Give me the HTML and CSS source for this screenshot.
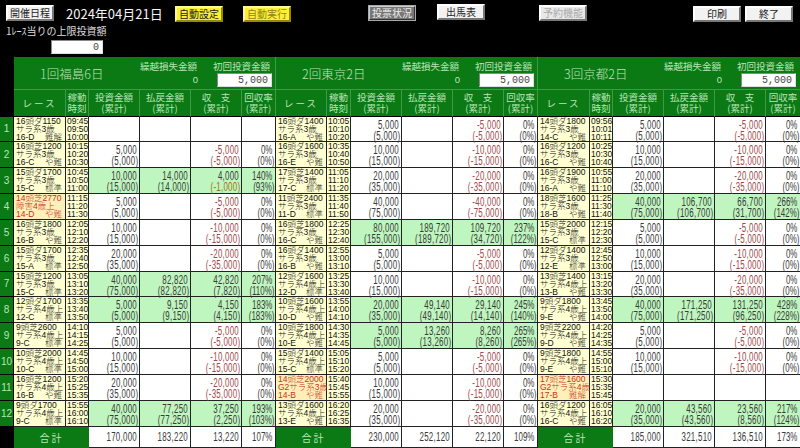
FILE: index.html
```html
<!DOCTYPE html>
<html lang="ja">
<head>
    <meta charset="UTF-8">
    <title>開催日程</title>
    <link rel="stylesheet" href="styles.css">
</head>
<body>
<header class="toolbar">
    <button class="btn btn-schedule">開催日程</button>
    <span class="date">2024年04月21日</span>
    <button class="btn yellow btn-auto1">自動設定</button>
    <button class="btn yellow faded btn-auto2">自動実行</button>
    <button class="btn dark btn-vote">投票状況</button>
    <button class="btn btn-card">出馬表</button>
    <button class="btn off btn-reserve">予約機能</button>
    <button class="btn btn-print">印刷</button>
    <button class="btn btn-quit">終了</button>
</header>

<section class="limit">
    <p>1ﾚｰｽ当りの上限投資額</p>
    <div class="box limit-box">0</div>
</section>

<main class="board">
    <!-- heading rows -->
    <div class="gutter"></div>
    <div class="venue">
        <h2>1回福島6日</h2>
        <div class="carry"><span>繰越損失金額</span><span class="carry-val">0</span></div>
        <div class="first"><span>初回投資金額</span><div class="box">5,000</div></div>
    </div>
    <div class="venue">
        <h2>2回東京2日</h2>
        <div class="carry"><span>繰越損失金額</span><span class="carry-val">0</span></div>
        <div class="first"><span>初回投資金額</span><div class="box">5,000</div></div>
    </div>
    <div class="venue">
        <h2>3回京都2日</h2>
        <div class="carry"><span>繰越損失金額</span><span class="carry-val">0</span></div>
        <div class="first"><span>初回投資金額</span><div class="box">5,000</div></div>
    </div>

    <div class="th wide">レース</div><div class="th">稼動<br>時刻</div><div class="th">投資金額<br>(累計)</div><div class="th">払戻金額<br>(累計)</div><div class="th">収　支<br>(累計)</div><div class="th">回収率<br>(累計)</div>
    <div class="th wide">レース</div><div class="th">稼動<br>時刻</div><div class="th">投資金額<br>(累計)</div><div class="th">払戻金額<br>(累計)</div><div class="th">収　支<br>(累計)</div><div class="th">回収率<br>(累計)</div>
    <div class="th wide">レース</div><div class="th">稼動<br>時刻</div><div class="th">投資金額<br>(累計)</div><div class="th">払戻金額<br>(累計)</div><div class="th">収　支<br>(累計)</div><div class="th">回収率<br>(累計)</div>

    <!-- 1R -->
    <div class="no">1</div>
    <div class="race">16頭ダ1150<br>サラ系3歳<br>16-D<em>難解</em></div><div class="time">09:45<br>09:50<br>10:00</div><div class="m"></div><div class="m"></div><div class="m"></div><div class="m rate"></div>
    <div class="race">16頭ダ1400<br>サラ系3歳<br>16-A<em>や難</em></div><div class="time">10:05<br>10:10<br>10:20</div><div class="m"><span>5,000</span><span>(5,000)</span></div><div class="m"></div><div class="m neg"><span>-5,000</span><span>(-5,000)</span></div><div class="m rate"><span>0%</span><span>(0%)</span></div>
    <div class="race">14頭ダ1800<br>サラ系3歳<br>14-C<em>や難</em></div><div class="time">09:56<br>10:01<br>10:11</div><div class="m"><span>5,000</span><span>(5,000)</span></div><div class="m"></div><div class="m neg"><span>-5,000</span><span>(-5,000)</span></div><div class="m rate"><span>0%</span><span>(0%)</span></div>

    <!-- 2R -->
    <div class="no">2</div>
    <div class="race">16頭芝1200<br>サラ系3歳<br>16-C<em>や難</em></div><div class="time">10:15<br>10:20<br>10:30</div><div class="m"><span>5,000</span><span>(5,000)</span></div><div class="m"></div><div class="m neg"><span>-5,000</span><span>(-5,000)</span></div><div class="m rate"><span>0%</span><span>(0%)</span></div>
    <div class="race">16頭ダ1600<br>サラ系3歳<br>16-E<em>や難</em></div><div class="time">10:35<br>10:40<br>10:50</div><div class="m"><span>10,000</span><span>(15,000)</span></div><div class="m"></div><div class="m neg"><span>-10,000</span><span>(-15,000)</span></div><div class="m rate"><span>0%</span><span>(0%)</span></div>
    <div class="race">16頭ダ1200<br>サラ系3歳<br>16-C<em>や難</em></div><div class="time">10:25<br>10:30<br>10:40</div><div class="m"><span>10,000</span><span>(15,000)</span></div><div class="m"></div><div class="m neg"><span>-10,000</span><span>(-15,000)</span></div><div class="m rate"><span>0%</span><span>(0%)</span></div>

    <!-- 3R -->
    <div class="no">3</div>
    <div class="race">15頭ダ1700<br>サラ系3歳<br>15-C<em>標準</em></div><div class="time">10:45<br>10:50<br>11:00</div><div class="m win"><span>10,000</span><span>(15,000)</span></div><div class="m win"><span>14,000</span><span>(14,000)</span></div><div class="m win"><span>4,000</span><span class="short">(-1,000)</span></div><div class="m rate win"><span>140%</span><span>(93%)</span></div>
    <div class="race">17頭芝1400<br>サラ系3歳<br>17-C<em>標準</em></div><div class="time">11:05<br>11:10<br>11:20</div><div class="m"><span>20,000</span><span>(35,000)</span></div><div class="m"></div><div class="m neg"><span>-20,000</span><span>(-35,000)</span></div><div class="m rate"><span>0%</span><span>(0%)</span></div>
    <div class="race">16頭ダ1900<br>サラ系3歳<br>16-A<em>や難</em></div><div class="time">10:55<br>11:00<br>11:10</div><div class="m"><span>20,000</span><span>(35,000)</span></div><div class="m"></div><div class="m neg"><span>-20,000</span><span>(-35,000)</span></div><div class="m rate"><span>0%</span><span>(0%)</span></div>

    <!-- 4R -->
    <div class="no">4</div>
    <div class="race grade">14頭芝2770<br>障害4歳上<br>14-D<em>や難</em></div><div class="time">11:15<br>11:20<br>11:30</div><div class="m"><span>5,000</span><span>(5,000)</span></div><div class="m"></div><div class="m neg"><span>-5,000</span><span>(-5,000)</span></div><div class="m rate"><span>0%</span><span>(0%)</span></div>
    <div class="race">11頭芝2400<br>サラ系3歳<br>11-D<em>標準</em></div><div class="time">11:35<br>11:40<br>11:50</div><div class="m"><span>40,000</span><span>(75,000)</span></div><div class="m"></div><div class="m neg"><span>-40,000</span><span>(-75,000)</span></div><div class="m rate"><span>0%</span><span>(0%)</span></div>
    <div class="race">18頭芝1600<br>サラ系3歳<br>18-B<em>や難</em></div><div class="time">11:25<br>11:30<br>11:40</div><div class="m win"><span>40,000</span><span>(75,000)</span></div><div class="m win"><span>106,700</span><span>(106,700)</span></div><div class="m win"><span>66,700</span><span>(31,700)</span></div><div class="m rate win"><span>266%</span><span>(142%)</span></div>

    <!-- 5R -->
    <div class="no">5</div>
    <div class="race">16頭芝1800<br>サラ系3歳<br>16-B<em>や難</em></div><div class="time">12:05<br>12:10<br>12:20</div><div class="m"><span>10,000</span><span>(15,000)</span></div><div class="m"></div><div class="m neg"><span>-10,000</span><span>(-15,000)</span></div><div class="m rate"><span>0%</span><span>(0%)</span></div>
    <div class="race">16頭芝1800<br>サラ系3歳<br>16-C<em>や難</em></div><div class="time">12:25<br>12:30<br>12:40</div><div class="m win"><span>80,000</span><span>(155,000)</span></div><div class="m win"><span>189,720</span><span>(189,720)</span></div><div class="m win"><span>109,720</span><span>(34,720)</span></div><div class="m rate win"><span>237%</span><span>(122%)</span></div>
    <div class="race">15頭芝2000<br>サラ系3歳<br>15-C<em>標準</em></div><div class="time">12:15<br>12:20<br>12:30</div><div class="m"><span>5,000</span><span>(5,000)</span></div><div class="m"></div><div class="m neg"><span>-5,000</span><span>(-5,000)</span></div><div class="m rate"><span>0%</span><span>(0%)</span></div>

    <!-- 6R -->
    <div class="no">6</div>
    <div class="race">15頭ダ1700<br>サラ系3歳<br>15-A<em>標準</em></div><div class="time">12:35<br>12:40<br>12:50</div><div class="m"><span>20,000</span><span>(35,000)</span></div><div class="m"></div><div class="m neg"><span>-20,000</span><span>(-35,000)</span></div><div class="m rate"><span>0%</span><span>(0%)</span></div>
    <div class="race">16頭ダ1400<br>サラ系3歳<br>16-B<em>や難</em></div><div class="time">12:55<br>13:00<br>13:10</div><div class="m"><span>5,000</span><span>(5,000)</span></div><div class="m"></div><div class="m neg"><span>-5,000</span><span>(-5,000)</span></div><div class="m rate"><span>0%</span><span>(0%)</span></div>
    <div class="race">12頭ダ1400<br>サラ系3歳<br>12-E<em>標準</em></div><div class="time">12:45<br>12:50<br>13:00</div><div class="m"><span>10,000</span><span>(15,000)</span></div><div class="m"></div><div class="m neg"><span>-10,000</span><span>(-15,000)</span></div><div class="m rate"><span>0%</span><span>(0%)</span></div>

    <!-- 7R -->
    <div class="no">7</div>
    <div class="race">15頭芝1200<br>サラ系3歳<br>15-C<em>標準</em></div><div class="time">13:05<br>13:10<br>13:20</div><div class="m win"><span>40,000</span><span>(75,000)</span></div><div class="m win"><span>82,820</span><span>(82,820)</span></div><div class="m win"><span>42,820</span><span>(7,820)</span></div><div class="m rate win"><span>207%</span><span>(110%)</span></div>
    <div class="race">12頭ダ1600<br>サラ系4歳上<br>12-D<em>標準</em></div><div class="time">13:25<br>13:30<br>13:40</div><div class="m"><span>10,000</span><span>(15,000)</span></div><div class="m"></div><div class="m neg"><span>-10,000</span><span>(-15,000)</span></div><div class="m rate"><span>0%</span><span>(0%)</span></div>
    <div class="race">13頭芝1400<br>サラ系4歳上<br>13-B<em>や難</em></div><div class="time">13:15<br>13:20<br>13:30</div><div class="m"><span>20,000</span><span>(35,000)</span></div><div class="m"></div><div class="m neg"><span>-20,000</span><span>(-35,000)</span></div><div class="m rate"><span>0%</span><span>(0%)</span></div>

    <!-- 8R -->
    <div class="no">8</div>
    <div class="race">12頭ダ1700<br>サラ系4歳上<br>12-C<em>標準</em></div><div class="time">13:35<br>13:40<br>13:50</div><div class="m win"><span>5,000</span><span>(5,000)</span></div><div class="m win"><span>9,150</span><span>(9,150)</span></div><div class="m win"><span>4,150</span><span>(4,150)</span></div><div class="m rate win"><span>183%</span><span>(183%)</span></div>
    <div class="race">10頭芝1600<br>サラ系4歳上<br>10-D<em>や難</em></div><div class="time">13:55<br>14:00<br>14:10</div><div class="m win"><span>20,000</span><span>(35,000)</span></div><div class="m win"><span>49,140</span><span>(49,140)</span></div><div class="m win"><span>29,140</span><span>(14,140)</span></div><div class="m rate win"><span>245%</span><span>(140%)</span></div>
    <div class="race">9頭ダ1800<br>サラ系4歳上<br>9-E<em>や難</em></div><div class="time">13:45<br>13:50<br>14:00</div><div class="m win"><span>40,000</span><span>(75,000)</span></div><div class="m win"><span>171,250</span><span>(171,250)</span></div><div class="m win"><span>131,250</span><span>(96,250)</span></div><div class="m rate win"><span>428%</span><span>(228%)</span></div>

    <!-- 9R -->
    <div class="no">9</div>
    <div class="race">9頭芝2600<br>サラ系4歳上<br>9-C<em>標準</em></div><div class="time">14:10<br>14:15<br>14:25</div><div class="m"><span>5,000</span><span>(5,000)</span></div><div class="m"></div><div class="m neg"><span>-5,000</span><span>(-5,000)</span></div><div class="m rate"><span>0%</span><span>(0%)</span></div>
    <div class="race">10頭芝1800<br>サラ系4歳上<br>10-E<em>や難</em></div><div class="time">14:30<br>14:35<br>14:45</div><div class="m win"><span>5,000</span><span>(5,000)</span></div><div class="m win"><span>13,260</span><span>(13,260)</span></div><div class="m win"><span>8,260</span><span>(8,260)</span></div><div class="m rate win"><span>265%</span><span>(265%)</span></div>
    <div class="race">9頭芝2200<br>サラ系4歳上<br>9-D<em>や難</em></div><div class="time">14:20<br>14:25<br>14:35</div><div class="m"><span>5,000</span><span>(5,000)</span></div><div class="m"></div><div class="m neg"><span>-5,000</span><span>(-5,000)</span></div><div class="m rate"><span>0%</span><span>(0%)</span></div>

    <!-- 10R -->
    <div class="no">10</div>
    <div class="race">10頭芝2000<br>サラ系4歳上<br>10-C<em>標準</em></div><div class="time">14:45<br>14:50<br>15:00</div><div class="m"><span>10,000</span><span>(15,000)</span></div><div class="m"></div><div class="m neg"><span>-10,000</span><span>(-15,000)</span></div><div class="m rate"><span>0%</span><span>(0%)</span></div>
    <div class="race">15頭ダ1400<br>サラ系4歳上<br>15-C<em>標準</em></div><div class="time">15:05<br>15:10<br>15:20</div><div class="m"><span>5,000</span><span>(5,000)</span></div><div class="m"></div><div class="m neg"><span>-5,000</span><span>(-5,000)</span></div><div class="m rate"><span>0%</span><span>(0%)</span></div>
    <div class="race">9頭芝1800<br>サラ系4歳上<br>9-E<em>や難</em></div><div class="time">14:55<br>15:00<br>15:10</div><div class="m"><span>10,000</span><span>(15,000)</span></div><div class="m"></div><div class="m neg"><span>-10,000</span><span>(-15,000)</span></div><div class="m rate"><span>0%</span><span>(0%)</span></div>

    <!-- 11R -->
    <div class="no">11</div>
    <div class="race">16頭芝1200<br>サラ系4歳上<br>16-B<em>や難</em></div><div class="time">15:20<br>15:25<br>15:35</div><div class="m"><span>20,000</span><span>(35,000)</span></div><div class="m"></div><div class="m neg"><span>-20,000</span><span>(-35,000)</span></div><div class="m rate"><span>0%</span><span>(0%)</span></div>
    <div class="race grade">14頭芝2000<br>G2サラ系3歳<br>14-B<em>や難</em></div><div class="time">15:40<br>15:45<br>15:55</div><div class="m"><span>10,000</span><span>(15,000)</span></div><div class="m"></div><div class="m neg"><span>-10,000</span><span>(-15,000)</span></div><div class="m rate"><span>0%</span><span>(0%)</span></div>
    <div class="race grade">17頭芝1600<br>G2サラ系4歳<br>17-B<em>難解</em></div><div class="time">15:30<br>15:35<br>15:45</div><div class="m"></div><div class="m"></div><div class="m"></div><div class="m rate"></div>

    <!-- 12R -->
    <div class="no">12</div>
    <div class="race">9頭ダ1700<br>サラ系4歳上<br>9-C<em>標準</em></div><div class="time">15:55<br>16:00<br>16:10</div><div class="m win"><span>40,000</span><span>(75,000)</span></div><div class="m win"><span>77,250</span><span>(77,250)</span></div><div class="m win"><span>37,250</span><span>(2,250)</span></div><div class="m rate win"><span>193%</span><span>(103%)</span></div>
    <div class="race">13頭ダ1600<br>サラ系4歳上<br>13-E<em>や難</em></div><div class="time">16:20<br>16:25<br>16:35</div><div class="m"><span>20,000</span><span>(35,000)</span></div><div class="m"></div><div class="m neg"><span>-20,000</span><span>(-35,000)</span></div><div class="m rate"><span>0%</span><span>(0%)</span></div>
    <div class="race">16頭ダ1200<br>サラ系4歳上<br>16-C<em>や難</em></div><div class="time">16:05<br>16:10<br>16:20</div><div class="m win"><span>20,000</span><span>(35,000)</span></div><div class="m win"><span>43,560</span><span>(43,560)</span></div><div class="m win"><span>23,560</span><span>(8,560)</span></div><div class="m rate win"><span>217%</span><span>(124%)</span></div>

    <!-- totals -->
    <div class="gutter-foot"></div>
    <div class="sum-label">合計</div><div class="m sum"><span>170,000</span></div><div class="m sum"><span>183,220</span></div><div class="m sum"><span>13,220</span></div><div class="m rate sum"><span>107%</span></div>
    <div class="sum-label">合計</div><div class="m sum"><span>230,000</span></div><div class="m sum"><span>252,120</span></div><div class="m sum"><span>22,120</span></div><div class="m rate sum"><span>109%</span></div>
    <div class="sum-label">合計</div><div class="m sum"><span>185,000</span></div><div class="m sum"><span>321,510</span></div><div class="m sum"><span>136,510</span></div><div class="m rate sum"><span>173%</span></div>
</main>
</body>
</html>
```

FILE: styles.css
```css
body {
    margin: 0;
    background: #000;
    font-family: "Noto Sans CJK JP", "Liberation Sans", sans-serif;
    overflow: hidden;
}

/* top buttons */
.toolbar {
    display: flex;
    align-items: flex-start;
    height: 22px;
    padding: 4px 0 0 6px;
    box-sizing: border-box;
}

.btn {
    flex: none;
    width: 48px;
    height: 16px;
    padding: 0;
    font: 10px/12px "Noto Sans CJK JP", sans-serif;
    color: #222;
    background: #f2f2f2;
    border: 2px solid;
    border-color: #fff #777 #777 #fff;
}

.yellow {
    background: #ffee33;
    border-color: #fff899 #998800 #998800 #fff899;
}

.faded { color: #8c8426; }

.dark {
    color: #eee;
    background: #777;
    border-color: #ccc #333 #333 #ccc;
    outline: 1px solid #aaa;
    outline-offset: -1px;
}

.off {
    color: #aaa;
    background: #e8e8e8;
}

.date {
    flex: none;
    margin: 3px 0 0 12px;
    width: 98px;
    color: #f4f4f4;
    font-size: 13px;
    line-height: 14px;
    white-space: nowrap;
}

.btn-schedule { margin-top: 1px; }
.btn-auto1 { margin: 2px 0 0 11px; }
.btn-auto2 { margin: 2px 0 0 20px; }
.btn-vote { margin: 1px 0 0 77px; }
.btn-card { margin-left: 21px; }
.btn-reserve { margin: 1px 0 0 54px; }
.btn-print { margin: 2px 0 0 106px; }
.btn-quit { margin: 2px 0 0 4px; }

/* limit field */
.limit {
    height: 35px;
    padding-left: 6px;
}

.limit p {
    margin: 0;
    padding-top: 3px;
    height: 15px;
    color: #ddd;
    font-size: 10px;
    line-height: 12px;
}

.box {
    width: 55px;
    height: 14px;
    box-sizing: border-box;
    padding-right: 3px;
    background: #fff;
    color: #444;
    text-align: right;
    font: 10px/13px "Liberation Mono", monospace;
    border: 1px solid;
    border-color: #888 #ddd #ddd #888;
}

.limit-box {
    width: 52px;
    margin-left: 45px;
}

/* main table */
.board {
    display: grid;
    grid-template-columns: 14px 52px 23px 51px 51px 51px 34px 51px 24px 51px 51px 51px 34px 52px 23px 51px 51px 51px 35px;
    grid-template-rows: 33px 26.5px repeat(12, 25.85px) 21px;
    width: 800px;
}

.gutter {
    grid-row: span 2;
    background: #000;
}

.venue {
    grid-column: span 6;
    display: flex;
    box-sizing: border-box;
    padding-top: 3px;
    background: #0b7a14;
    color: #b9e4b9;
    font-size: 9.5px;
    line-height: 12px;
    border-right: 1px solid #3f9a45;
    border-bottom: 1px solid #3f9a45;
}

.venue h2 {
    margin: 4px 0 0 26px;
    width: 100px;
    font-size: 12.5px;
    font-weight: 300;
    line-height: 20px;
    white-space: nowrap;
}

.carry {
    display: flex;
    flex-direction: column;
    width: 58px;
    white-space: nowrap;
}

.carry-val {
    margin-top: 2px;
    text-align: right;
    font-family: "Liberation Sans", sans-serif;
}

.first {
    margin-left: 15px;
    width: 60px;
    white-space: nowrap;
}

.first .box {
    margin: 1px 0 0 4px;
}

.th {
    box-sizing: border-box;
    background: #0b7a14;
    color: #b9e4b9;
    font-size: 9.5px;
    line-height: 11px;
    text-align: center;
    padding-top: 2px;
    white-space: nowrap;
    border-right: 1px solid #3f9a45;
    border-bottom: 1px solid #000;
}

.wide {
    line-height: 22px;
    letter-spacing: 2px;
}

.no {
    display: flex;
    align-items: center;
    justify-content: center;
    box-sizing: border-box;
    background: #0b7a14;
    color: #b9e4b9;
    font: 10px "Liberation Sans", sans-serif;
    border-bottom: 1px solid #000;
    border-right: 1px solid #000;
}

.race, .time {
    box-sizing: border-box;
    padding-left: 2px;
    background: #ffffd2;
    color: #111;
    font-family: "Liberation Sans", "Noto Sans CJK JP", sans-serif;
    font-size: 8.5px;
    font-weight: 300;
    line-height: 8px;
    white-space: nowrap;
    border-right: 1px solid #222;
    border-bottom: 1px solid #222;
}

.time { padding-left: 1px; }

.race em {
    float: right;
    margin-right: 3px;
    font-style: normal;
}

.grade {
    background: #ffefb8;
    color: #c8321e;
}

.m {
    box-sizing: border-box;
    padding-top: 3px;
    background: #fff;
    color: #3a3a3a;
    font: 12px/11px "Liberation Sans", sans-serif;
    letter-spacing: 0.4px;
    border-right: 1px solid #222;
    border-bottom: 1px solid #222;
}

/* flex-end so text wider than the cell overflows left before it is narrowed */
.m span {
    display: flex;
    justify-content: flex-end;
    white-space: nowrap;
    padding-right: 1px;
    transform: scaleX(0.66);
    transform-origin: right;
}

.m span:first-child { padding-right: 3px; }

.win { background: #bff5bf; }
.neg { color: #a04848; }
.short { color: #9a7410; }
.rate { letter-spacing: 0; }
.rate span:first-child { padding-right: 4px; }

.gutter-foot { background: #000; }

.sum-label {
    grid-column: span 2;
    display: flex;
    align-items: center;
    justify-content: center;
    box-sizing: border-box;
    background: #0b7a14;
    color: #b9e4b9;
    font-size: 10px;
    letter-spacing: 2px;
}

.sum {
    padding-top: 5px;
}
```
